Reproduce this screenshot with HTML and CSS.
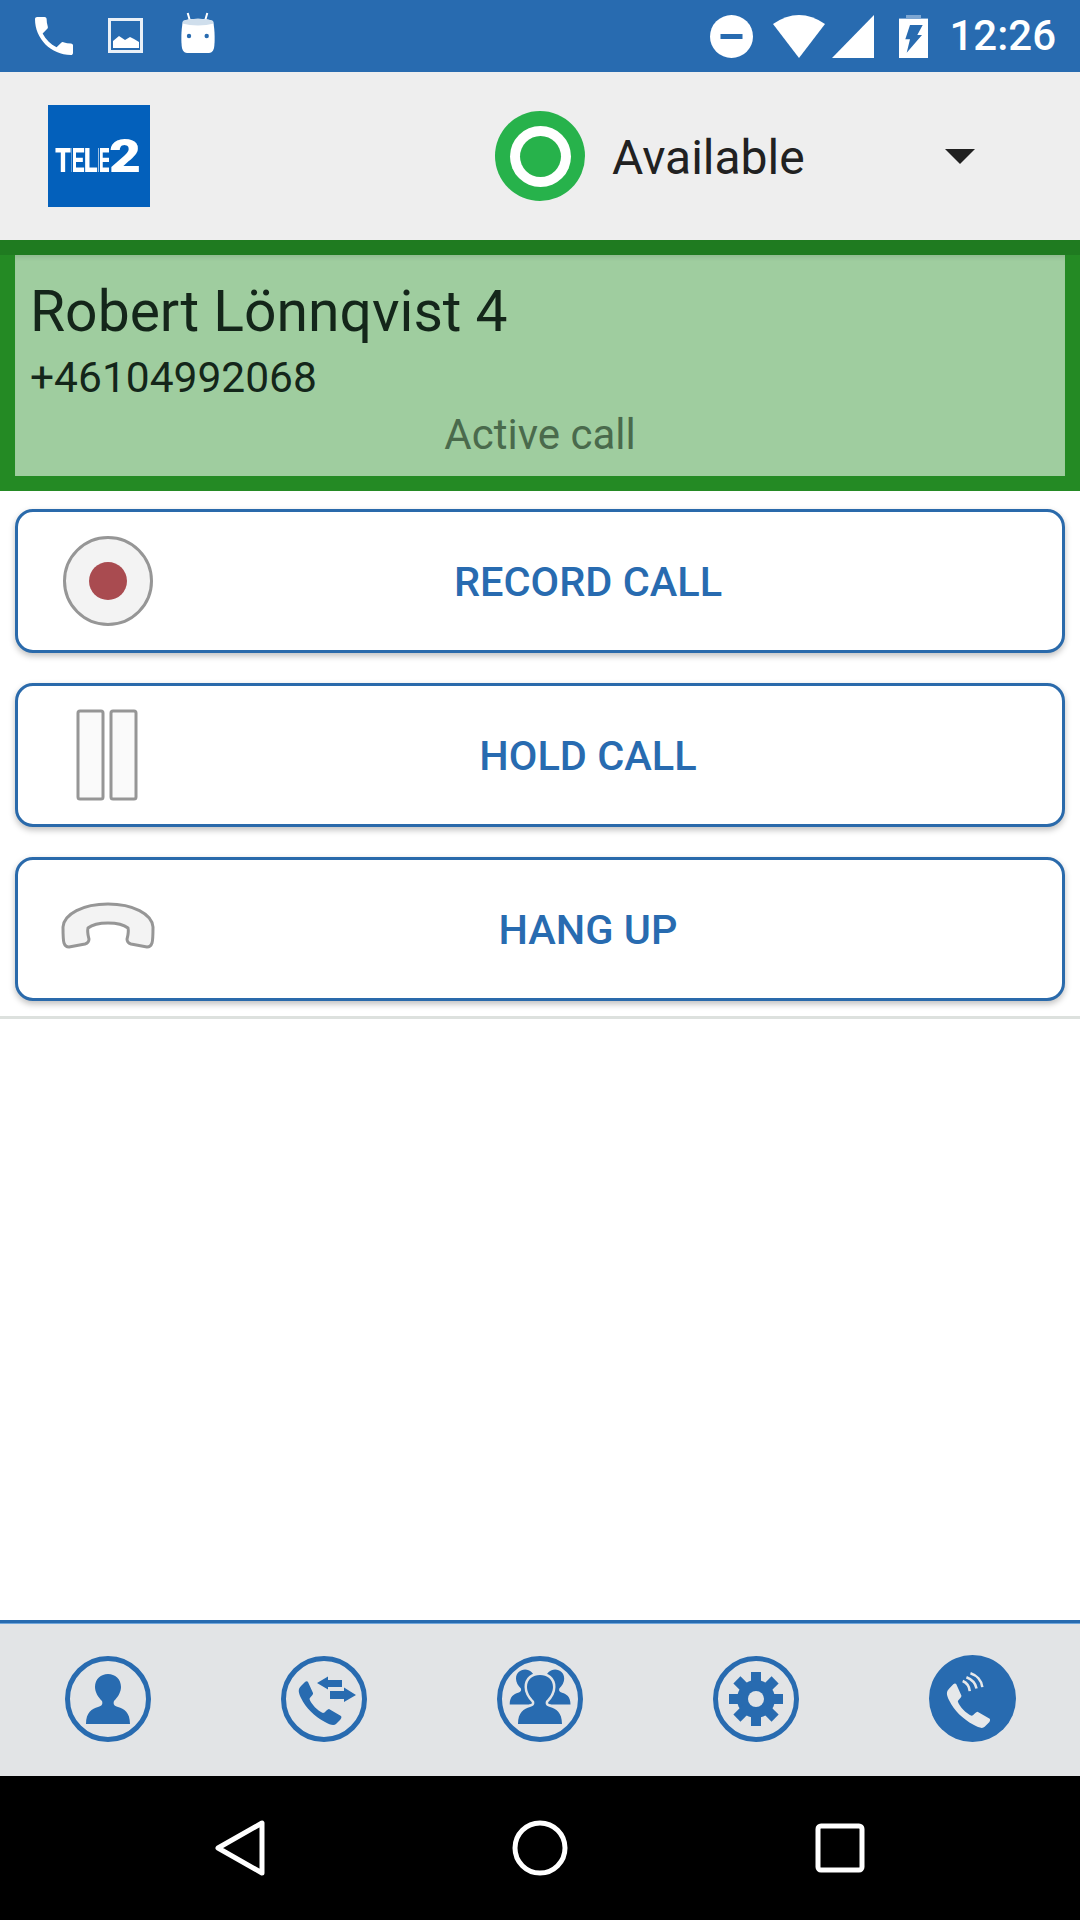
FILE: index.html
```html
<!DOCTYPE html>
<html lang="en">
<head>
  <meta charset="UTF-8"/>
  <meta name="viewport" content="width=device-width, initial-scale=1"/>
  <title>Active call</title>
  <link rel="stylesheet" href="styles.css">
</head>
<body>
  <div class="screen">
    <div class="status-bar">
      <div class="status-left">
        <svg class="ic-phone" viewBox="3 3 18 18"><path fill="#fff" d="M6.62 10.79c1.44 2.83 3.76 5.14 6.59 6.59l2.2-2.2c.27-.27.67-.36 1.02-.24 1.12.37 2.33.57 3.57.57.55 0 1 .45 1 1V20c0 .55-.45 1-1 1-9.39 0-17-7.61-17-17 0-.55.45-1 1-1h3.5c.55 0 1 .45 1 1 0 1.25.2 2.45.57 3.57.11.35.03.74-.25 1.02l-2.2 2.2z"/></svg>
        <svg class="ic-image" viewBox="0 0 36 36"><rect x="1.5" y="1.5" width="32" height="32" fill="none" stroke="#fff" stroke-width="3" opacity=".9"/><path fill="#fff" d="M5 30v-7l6-5 6 4 5-3 4 2 5 3v6z"/></svg>
        <svg class="ic-android" viewBox="0 0 36 42"><path d="M7.700 1 10 9M27.300 1 25 9" stroke="#fff" stroke-width="2" fill="none"/><path fill="#fff" d="M3 9c7-3 23-3 30 0 2 8 2 22 1 27-1 4-3 5-6 5H8c-3 0-5-1-6-5C1 31 1 17 3 9z"/><path fill="#cfdeec" d="M3 9c7-3 23-3 30 0l.6 2.500C25 14 11 14 2.400 11.500z"/><circle cx="9" cy="24" r="2.200" fill="#286bb0"/><circle cx="26.700" cy="24" r="2.200" fill="#286bb0"/></svg>
      </div>
      <div class="status-right">
        <svg class="ic-dnd" viewBox="0 0 43 43"><circle cx="21.500" cy="21.500" r="21.500" fill="#fff"/><rect x="10.500" y="19" width="22" height="5" fill="#286bb0"/></svg>
        <svg class="ic-wifi" viewBox="0 0 54 43"><path fill="#fff" d="M1 9Q27-9 53 9L27 43z"/></svg>
        <svg class="ic-signal" viewBox="0 0 42 43"><path fill="#fff" d="M42 0v43H0z"/></svg>
        <svg class="ic-battery" viewBox="0 0 29 43"><path fill="#7da6d2" d="M7 0h15v3h7v5H0V3h7z"/><path fill="#fff" d="M0 4h29v39H0z"/><path fill="#286bb0" d="M11 10h12.700l-5.400 10H23L7.700 37.700 11 24.300H6.300z"/></svg>
        <span class="clock">12:26</span>
      </div>
    </div>

    <div class="top-bar">
      <div class="logo"><span class="logo-tele">TELE</span><span class="logo-two">2</span></div>
      <div class="presence-dot"><div class="presence-ring"><div class="presence-core"></div></div></div>
      <span class="presence-label">Available</span>
      <span class="caret"></span>
    </div>

    <div class="call-panel">
      <div class="call-inner">
        <div class="call-name">Robert Lönnqvist 4</div>
        <div class="call-number">+46104992068</div>
        <div class="call-state">Active call</div>
      </div>
    </div>

    <div class="actions">
      <div class="action-btn">
        <div class="action-icon">
          <svg width="90" height="90" viewBox="0 0 90 90"><circle cx="45" cy="45" r="43.500" fill="#f3f3f3" stroke="#969696" stroke-width="3"/><circle cx="45" cy="45" r="19" fill="#a94b50"/></svg>
        </div>
        <span class="action-label">RECORD CALL</span>
      </div>
      <div class="action-btn">
        <div class="action-icon icon-hold">
          <svg width="62" height="92" viewBox="0 0 62 92"><g fill="#fafafa" stroke="#969696" stroke-width="3"><rect x="2" y="2" width="25" height="88" rx="2"/><rect x="35" y="2" width="25" height="88" rx="2"/></g></svg>
        </div>
        <span class="action-label">HOLD CALL</span>
      </div>
      <div class="action-btn">
        <div class="action-icon icon-hang">
          <svg width="94" height="48" viewBox="0 0 94 48"><path fill="#f3f3f3" stroke="#969696" stroke-width="3" stroke-linejoin="round" d="M2 25C3 12 22 2 47 2s44 10 45 23c0 9 0 13-1 16-1 3-3 4-5 4l-16-3c-3-1-4-2-4-5 1-4 2-7 1-11-5-4-13-5-20-5s-15 1-20 5c-1 4 0 7 1 11 0 3-1 4-4 5L8 45c-2 0-4-1-5-4-1-3-1-7-1-16z"/></svg>
        </div>
        <span class="action-label">HANG UP</span>
      </div>
    </div>
    <div class="divider"></div>

    <div class="spacer"></div>

    <div class="tab-bar">
      <div class="tab">
        <svg width="86" height="86" viewBox="0 0 86 86"><circle class="tab-ring" cx="43" cy="43" r="40.500"/><path class="tab-fill" d="M21 68C21 56 27 53 33 51 37 50 38 48 37 45 33 41 30 36 30 31 30 23 36 18 43 18s13 5 13 13C56 36 53 41 49 45 48 48 49 50 53 51 59 53 65 56 65 68z"/></svg>
      </div>
      <div class="tab">
        <svg width="86" height="86" viewBox="0 0 86 86"><circle class="tab-ring" cx="43" cy="43" r="40.500"/><path class="tab-fill" transform="translate(17 25)" d="M10 1 15 12C15.500 14 12 16 11.500 18 13 23 20 30 25 32 27 32 29 28 31 28L43 35C44 36 43 38 42 39L38 43C36 45 32 44 27 41 16 35 8 27 3 17 0 11 0 8 3 5L7 1C8 0 9.500 0 10 1z"/><path class="tab-fill" d="M36 27 47 20.500V24H61V31H47V33.500zM75 39 63 46V43H49V35H63V31.500z"/></svg>
      </div>
      <div class="tab">
        <svg width="86" height="86" viewBox="0 0 86 86"><circle class="tab-ring" cx="43" cy="43" r="40.500"/><g class="tab-fill"><path transform="translate(-2 1) scale(.7)" d="M21 68C21 56 27 53 33 51 37 50 38 48 37 45 33 41 30 36 30 31 30 23 36 18 43 18s13 5 13 13C56 36 53 41 49 45 48 48 49 50 53 51 59 53 65 56 65 68z"/><path transform="translate(28 1) scale(.7)" d="M21 68C21 56 27 53 33 51 37 50 38 48 37 45 33 41 30 36 30 31 30 23 36 18 43 18s13 5 13 13C56 36 53 41 49 45 48 48 49 50 53 51 59 53 65 56 65 68z"/><path class="person-halo" d="M21 68C21 56 27 53 33 51 37 50 38 48 37 45 33 41 30 36 30 31 30 23 36 19 43 19s13 4 13 12C56 36 53 41 49 45 48 48 49 50 53 51 59 53 65 56 65 68z"/></g></svg>
      </div>
      <div class="tab">
        <svg width="86" height="86" viewBox="0 0 86 86"><circle class="tab-ring" cx="43" cy="43" r="40.500"/><g class="tab-fill"><circle cx="43" cy="43" r="19"/><rect x="38" y="16" width="10" height="54"/><rect x="38" y="16" width="10" height="54" transform="rotate(45 43 43)"/><rect x="38" y="16" width="10" height="54" transform="rotate(90 43 43)"/><rect x="38" y="16" width="10" height="54" transform="rotate(135 43 43)"/></g><circle cx="43" cy="43" r="8" fill="#e2e4e6"/></svg>
      </div>
      <div class="tab">
        <svg width="87" height="87" viewBox="0 0 86 86"><circle class="tab-fill" cx="43" cy="43" r="43"/><path fill="#e6e8ea" transform="translate(17 28)" d="M10 1 15 12C15.500 14 12 16 11.500 18 13 23 20 30 25 32 27 32 29 28 31 28L43 35C44 36 43 38 42 39L38 43C36 45 32 44 27 41 16 35 8 27 3 17 0 11 0 8 3 5L7 1C8 0 9.500 0 10 1z"/><path fill="none" stroke="#e6e8ea" stroke-width="2.500" d="M33.300 25.700c3.500 1.500 6.500 5 7 10M37 22c5 2 9 6 10 11M41 18c6 2 11 7 11.700 13.700"/></svg>
      </div>
    </div>

    <div class="nav-bar">
      <svg width="50" height="56" viewBox="0 0 50 56"><path d="M3 28 47 3V53z" fill="none" stroke="#fff" stroke-width="5" stroke-linejoin="round"/></svg>
      <svg width="56" height="56" viewBox="0 0 56 56"><circle cx="28" cy="28" r="25" fill="none" stroke="#fff" stroke-width="5"/></svg>
      <svg width="50" height="50" viewBox="0 0 50 50"><rect x="3" y="3" width="44" height="44" rx="3" fill="none" stroke="#fff" stroke-width="5"/></svg>
    </div>
  </div>
</body>
</html>
```

FILE: styles.css
```css
html, body { margin: 0; padding: 0; background: #fff; }
.screen { width: 1080px; height: 1920px; display: flex; flex-direction: column; font-family: Roboto, Arial, sans-serif; overflow: hidden; }

.status-bar { height: 72px; background: #286bb0; display: flex; align-items: center; justify-content: space-between; padding: 0 24px 0 35px; }
.status-bar svg { display: block; }
.status-left { display: flex; align-items: center; }
.status-right { display: flex; align-items: center; }
.ic-phone { width: 38px; height: 38px; margin-right: 35px; }
.ic-image { width: 36px; height: 36px; margin-right: 36px; }
.ic-android { width: 36px; height: 42px; margin-top: -6px; }
.ic-dnd { width: 43px; height: 43px; }
.ic-wifi { width: 54px; height: 43px; margin-left: 19px; }
.ic-signal { width: 42px; height: 43px; margin-left: 6px; }
.ic-battery { width: 29px; height: 43px; margin-left: 25px; }
.clock { color: #fff; font-size: 42px; font-weight: 500; margin-left: 21px; line-height: 72px; }

.top-bar { height: 168px; background: #eee; display: flex; align-items: center; padding: 0 105px 0 48px; }
.logo { width: 102px; height: 102px; box-sizing: border-box; padding-left: 7px; background: #0360bb; display: flex; align-items: baseline; gap: 3px; line-height: 102px; color: #fff; font-weight: 900; }
.logo-tele { display: inline-block; width: 54px; font-size: 34px; letter-spacing: -1px; white-space: nowrap; transform: scaleX(.75); transform-origin: left; color: transparent; background: linear-gradient(90deg, #fff 31%, #0360bb 31% 33%, #fff 33% 82%, #0360bb 82% 84%, #fff 84%); background-clip: text; -webkit-background-clip: text; padding-right: 18px; }
.logo-two { display: inline-block; width: 32px; font-size: 46px; transform: scaleX(1.2); transform-origin: left; margin-left: -21px; }
.presence-dot { width: 90px; height: 90px; margin-left: 345px; border-radius: 50%; background: #27b24b; display: flex; align-items: center; justify-content: center; }
.presence-ring { width: 61px; height: 61px; border-radius: 50%; background: #fff; display: flex; align-items: center; justify-content: center; }
.presence-core { width: 41px; height: 41px; border-radius: 50%; background: #27b24b; }
.presence-label { font-size: 48px; color: #212121; margin-left: 27px; padding-top: 2px; }
.caret { margin-left: auto; border-left: 15px solid transparent; border-right: 15px solid transparent; border-top: 15px solid #212121; }

.call-panel { background: #248a24; border-top: 15px solid #1f7b20; padding: 0 15px 15px 15px; }
.call-inner { height: 221px; box-sizing: border-box; background: #9fcd9f; padding: 23px 15px 0 15px; box-shadow: inset 0 5px 5px -3px #0000001a; }
.call-name { font-size: 57px; line-height: 68px; color: #14261a; }
.call-number { font-size: 42.500px; line-height: 54px; color: #14261a; margin-top: 5px; }
.call-state { font-size: 42px; line-height: 54px; color: #4a6a4c; text-align: center; margin-top: 3px; }

.actions { display: flex; flex-direction: column; gap: 30px; padding: 18px 15px 0 15px; }
.action-btn { height: 144px; box-sizing: border-box; border: 3px solid #2a6aab; border-radius: 18px; background: #fff; box-shadow: 0 3px 6px #00000040; display: flex; align-items: center; padding-right: 84px; }
.action-icon { width: 180px; display: flex; justify-content: center; }
.icon-hold { padding-right: 3px; width: 177px; }
.icon-hang { padding-bottom: 6px; }
.action-icon svg { display: block; }
.action-label { flex: 1; text-align: center; color: #286bb0; font-size: 41.500px; font-weight: 500; }
.divider { height: 3px; background: #dde1de; margin-top: 15px; }

.spacer { flex: 1; }

.tab-bar { height: 153px; background: #e2e4e6; border-top: 3px solid #286bb0; box-shadow: inset 0 1px 0 #6fa6dc; display: grid; grid-template-columns: repeat(5, 216px); align-items: center; justify-items: center; }
.tab { margin-bottom: 2px; }
.tab svg { display: block; }
.tab-ring { fill: none; stroke: #286bb0; stroke-width: 5; }
.tab-fill { fill: #286bb0; }
.person-halo { stroke: #e2e4e6; stroke-width: 5; paint-order: stroke; }

.nav-bar { height: 144px; background: #000; display: flex; align-items: center; justify-content: center; gap: 247px; }
```
